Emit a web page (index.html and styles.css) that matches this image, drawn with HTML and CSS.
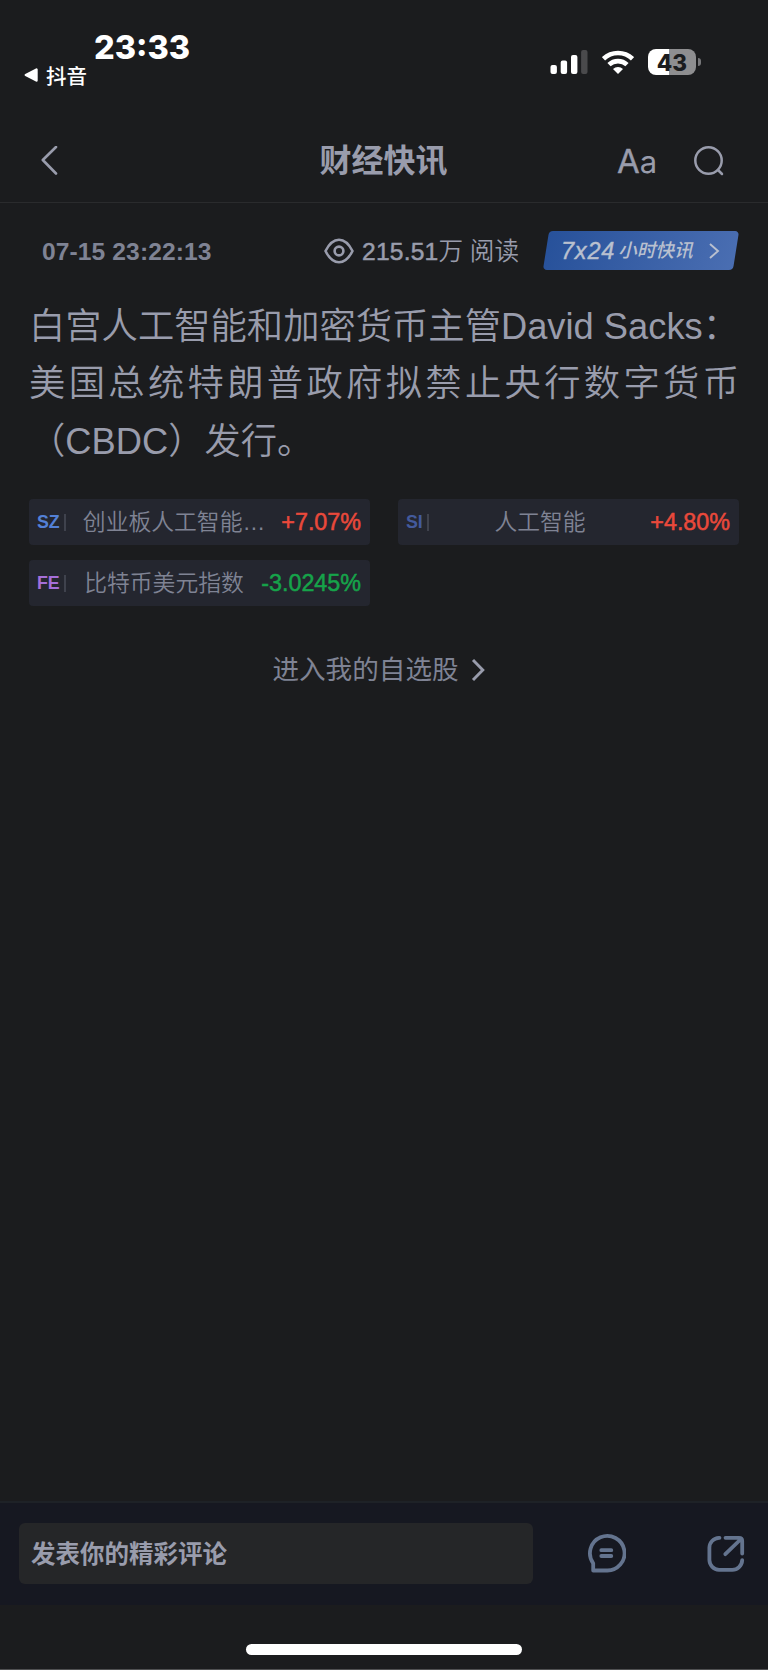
FILE: index.html
```html
<!DOCTYPE html>
<html lang="zh-CN">
<head>
    <meta charset="UTF-8">
    <meta name="viewport" content="width=device-width, initial-scale=1.0">
    <title>财经快讯</title>
    <link rel="stylesheet" href="styles.css">
</head>
<body>
    <div class="status-bar">
        <div class="status-left">
            <div class="clock">23:33</div>
            <div class="back-app">
                <svg width="14" height="14" viewBox="0 0 14 14"><path d="M1.8 7 12.500 1.500v11z" fill="#fff" stroke="#fff" stroke-width="2.400" stroke-linejoin="round"/></svg>
                <span>抖音</span>
            </div>
        </div>
        <div class="status-right">
            <svg class="signal" width="38" height="24" viewBox="0 0 38 24" fill="#fff">
                <rect x="0.5" y="15" width="6.4" height="9" rx="2"/>
                <rect x="10.7" y="10.5" width="6.4" height="13.5" rx="2"/>
                <rect x="21" y="5" width="6.4" height="19" rx="2"/>
                <rect x="31.1" y="0" width="6.4" height="24" rx="2" fill="#4a4a4c"/>
            </svg>
            <svg class="wifi" width="32" height="24" viewBox="0 0 32 24">
                <g fill="none" stroke="#fff" stroke-width="4.6">
                    <path d="M1.5 8.8a21 21 0 0 1 29 0"/>
                    <path d="M7 14.7a13 13 0 0 1 18 0"/>
                </g>
                <path d="M11 18.9a7.4 7.4 0 0 1 10 0L16 24z" fill="#fff"/>
            </svg>
            <div class="battery">43</div>
            <div class="battery-cap"></div>
        </div>
    </div>

    <header class="nav">
        <div class="nav-side">
            <svg width="18" height="30" viewBox="0 0 18 30"><path d="M16 1 2.800 14l13.200 13.500" fill="none" stroke="#999cac" stroke-width="2.6" stroke-linecap="round" stroke-linejoin="round"/></svg>
        </div>
        <h1>财经快讯</h1>
        <div class="nav-side nav-right">
            <span class="font-size">A<small>a</small></span>
            <svg width="30" height="30" viewBox="0 0 30 30" fill="none" stroke="#999cac" stroke-width="2.5" stroke-linecap="round">
                <circle cx="14.500" cy="14.500" r="13.2"/>
                <path d="m24 24 4 4"/>
            </svg>
        </div>
    </header>

    <main>
        <div class="meta">
            <span class="date">07-15 23:22:13</span>
            <span class="views">
                <svg width="30" height="26" viewBox="0 0 30 26" fill="none" stroke="#999cac" stroke-width="2.6" stroke-linejoin="round">
                    <path d="M1.5 13C5 6 9.500 1.700 15 1.700S25 6 28.500 13C25 20 20.500 24.300 15 24.300S5 20 1.500 13z"/>
                    <circle cx="15" cy="13" r="4.400"/>
                </svg>
                <span class="count"><b>215.51</b>万 阅读</span>
            </span>
            <a class="badge">
                <i class="num">7x24</i>
                <i class="label">小时快讯</i>
                <svg width="12" height="18" viewBox="0 0 12 18"><path d="m2 2 8 7-8 7" fill="none" stroke="#b9c0cf" stroke-width="1.900"/></svg>
            </a>
        </div>

        <div class="news">
            <p class="full">白宫人工智能和加密货币主管David Sacks：</p>
            <p class="full">美国总统特朗普政府拟禁止央行数字货币</p>
            <p>（CBDC）发行。</p>
        </div>

        <div class="stocks">
            <div class="stock">
                <span class="market sz">SZ</span>
                <span class="name">创业板人工智能…</span>
                <span class="up">+7.07%</span>
            </div>
            <div class="stock">
                <span class="market si">SI</span>
                <span class="name">人工智能</span>
                <span class="up">+4.80%</span>
            </div>
            <div class="stock">
                <span class="market fe">FE</span>
                <span class="name">比特币美元指数</span>
                <span class="down">-3.0245%</span>
            </div>
        </div>

        <a class="my-stocks">
            <span>进入我的自选股</span>
            <svg width="14" height="24" viewBox="0 0 14 24"><path d="M2 2l9.800 10L2 22" fill="none" stroke="#999cac" stroke-width="2.900"/></svg>
        </a>
    </main>

    <footer>
        <div class="comment-input">发表你的精彩评论</div>
        <svg class="comment" width="40" height="40" viewBox="0 0 40 40" fill="none" stroke="#64748f" stroke-width="3.800" stroke-linecap="round" stroke-linejoin="round">
            <path d="M7.200 37.500V30.300A17.300 17.300 0 1 1 20.500 37.500z"/>
            <path d="M15.300 17.200h10M15.300 23h10"/>
        </svg>
        <svg class="share" width="38" height="38" viewBox="0 0 38 38" fill="none" stroke="#64748f" stroke-width="3.800" stroke-linecap="round" stroke-linejoin="round">
            <path d="M12.500 2.800H12A10 10 0 0 0 2.400 12.500V25A10 10 0 0 0 12 34.800H25A10 10 0 0 0 35.200 25.200"/>
            <path d="M18.500 2.800H32q3.200 0 3.200 3.200V18.500M34 4 18.300 19.200"/>
        </svg>
    </footer>
    <div class="home-area"><div class="home-bar"></div></div>
</body>
</html>
```
FILE: styles.css
```css
* {
    box-sizing: border-box;
}
body {
    margin: 0;
    height: 1670px;
    display: flex;
    flex-direction: column;
    background: #1b1c1e;
    color: #999cac;
    font-family: "Liberation Sans", "Noto Sans CJK SC", sans-serif;
    text-spacing-trim: space-all;
    overflow: hidden;
}
svg {
    display: block;
    flex: none;
}

/* status bar */
.status-bar {
    height: 120px;
    display: flex;
    justify-content: space-between;
    color: #fff;
}
.status-left {
    padding: 28px 0 0 24px;
}
.clock {
    margin-left: 70px;
    font: 800 32.5px/40px Inter, sans-serif;
}
.back-app {
    display: flex;
    align-items: center;
    gap: 8px;
    height: 14px;
    font-size: 20.5px;
    font-weight: 500;
    font-family: "Noto Sans CJK SC", sans-serif;
}
.status-right {
    display: flex;
    align-items: center;
    height: 26px;
    margin: 49px 67px 0 0;
}
.wifi {
    margin: 0 14px;
}
.battery {
    width: 48px;
    height: 26px;
    border-radius: 8px;
    background: linear-gradient(90deg, #fff 21px, #8e8e90 21px);
    color: #1b1c1e;
    font: 800 22.5px/27px Inter, sans-serif;
    text-align: center;
}
.battery-cap {
    width: 3px;
    height: 8px;
    margin-left: 2px;
    border-radius: 0 4px 4px 0;
    background: #77777a;
}

/* header */
.nav {
    height: 83px;
    display: flex;
    justify-content: space-between;
    align-items: center;
    padding: 0 44px 0 40px;
    border-bottom: 1px solid #2a2b2d;
}
.nav-side {
    width: 110px;
}
.nav-right {
    display: flex;
    align-items: center;
    justify-content: space-between;
    width: 107px;
}
.nav h1 {
    margin: 0;
    font-size: 32px;
    line-height: 40px;
    font-weight: 700;
}
.font-size {
    font: 400 33px/34px Inter, sans-serif;
    -webkit-text-stroke: 0.4px;
}
.font-size small {
    font-size: 31px;
    -webkit-text-stroke: 0;
}

/* news */
main {
    flex: 1;
    padding: 28px 29px 0;
}
.meta {
    display: flex;
    align-items: center;
    height: 39px;
    padding-left: 13px;
    font-size: 24.6px;
}
.date {
    color: #7f8394;
    font-weight: 700;
    letter-spacing: 0.1px;
    width: 282px;
    padding-top: 2px;
}
.views {
    display: flex;
    align-items: center;
    gap: 8px;
    font-weight: 350;
    white-space: nowrap;
}
.views b {
    font-weight: 400;
    letter-spacing: 0.2px;
    -webkit-text-stroke: 0.5px;
}
.count {
    line-height: 30px;
    padding-top: 3px;
}
.badge {
    position: relative;
    z-index: 0;
    display: flex;
    align-items: center;
    width: 196px;
    height: 39px;
    margin-left: auto;
    padding: 0 19px 0 18px;
    color: #b9c0cf;
}
.badge::before {
    content: "";
    position: absolute;
    z-index: -1;
    inset: 0 3px;
    border-radius: 4px;
    transform: skewX(-9deg);
    background: linear-gradient(100deg, #27519a, #4a6eb2);
}
.badge .num {
    width: 57px;
    font: italic 500 23.5px/30px "Liberation Sans", sans-serif;
    letter-spacing: 0.8px;
    -webkit-text-stroke: 0.4px;
}
.badge .label {
    font-size: 18.7px;
    font-weight: 500;
    line-height: 30px;
}
.badge svg {
    margin-left: auto;
}
.news {
    margin-top: 28px;
    font-size: 36.3px;
    font-weight: 350;
    line-height: 57.3px;
}
.news p {
    margin: 0;
    white-space: nowrap;
}
.news .full {
    text-align-last: justify;
}

/* related stocks */
.stocks {
    display: grid;
    grid-template-columns: 341px 341px;
    justify-content: space-between;
    gap: 15px 0;
    margin-top: 29px;
}
.stock {
    display: flex;
    align-items: center;
    height: 46px;
    padding: 1px 9px 0 8px;
    border-radius: 4px;
    background: #24262f;
    font-size: 23.3px;
    white-space: nowrap;
}
.market {
    display: flex;
    align-items: center;
    gap: 4px;
    font-size: 17.8px;
    font-weight: 700;
}
.market::after {
    content: "";
    width: 2px;
    height: 17px;
    background: #3f424d;
}
.sz {
    color: #5380d6;
}
.si {
    color: #435a9c;
}
.fe {
    color: #a56fd9;
}
.name {
    flex: 1;
    padding-left: 1px;
    color: #7f8394;
    font-size: 22.8px;
    font-weight: 350;
    line-height: 34px;
    text-align: center;
}
.up,
.down {
    padding-top: 1px;
    -webkit-text-stroke: 0.5px;
}
.up {
    color: #e9493b;
}
.down {
    color: #16a34a;
}
.my-stocks {
    display: flex;
    justify-content: center;
    align-items: center;
    gap: 12px;
    margin: 44px 11px 0 0;
    color: #7f8394;
    font-size: 26.6px;
    line-height: 40px;
}

/* bottom bar */
footer {
    display: flex;
    align-items: center;
    height: 104px;
    padding: 0 23px 2px 19px;
    border-top: 2px solid #1e2227;
    background: #161821;
}
.comment-input {
    width: 514px;
    height: 61px;
    padding-left: 12px;
    border-radius: 6px;
    background: #252628;
    font-size: 24.5px;
    font-weight: 700;
    line-height: 64px;
}
.comment {
    margin-left: 53px;
}
.share {
    margin-left: auto;
    margin-top: 2px;
}
.home-area {
    height: 65px;
    padding-top: 39px;
    border-bottom: 1px solid #505052;
}
.home-bar {
    width: 276px;
    height: 11px;
    margin: 0 auto;
    border-radius: 6px;
    background: #fff;
}
```
